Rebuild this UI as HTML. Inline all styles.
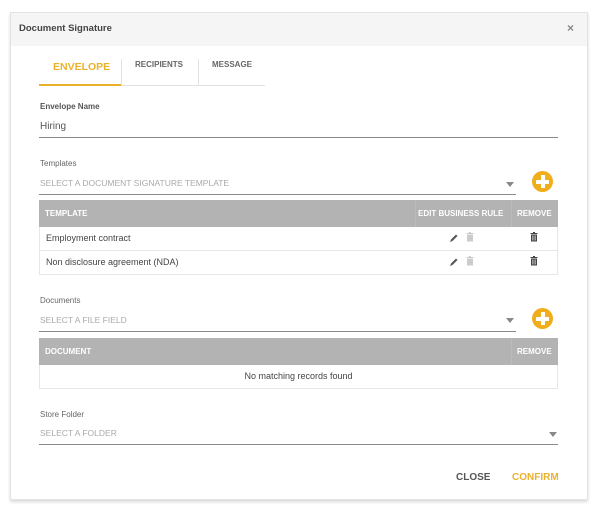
<!DOCTYPE html>
<html><head><style>
*{margin:0;padding:0;box-sizing:border-box}
body{width:600px;height:514px;background:#fff;font-family:"Liberation Sans",sans-serif;position:relative;overflow:hidden;color:#555}
.a{position:absolute;white-space:nowrap}
.modal{position:absolute;left:10px;top:12px;width:578px;height:488px;background:#fff;border:1px solid #e2e2e2;box-shadow:0 2px 3px rgba(0,0,0,.15)}
.hdr{position:absolute;left:11px;top:13px;width:576px;height:33px;background:#f5f5f5}
.line{position:absolute;height:1px;background:#8a8a8a}
.lbl{font-size:8px;color:#666}
.ph{font-size:8.5px;color:#aaa}
.th{position:absolute;background:#b3b3b3;color:#fff;font-weight:bold;font-size:8px;height:27px;line-height:27px}
.row{position:absolute;border:1px solid #e6e6e6;border-top:none;font-size:9px;color:#444;line-height:22px;padding-left:6px}
.plus{position:absolute;width:21px;height:21px;border-radius:50%;background:#f0ad1c}
.plus:before{content:"";position:absolute;left:4px;top:8.5px;width:13px;height:4px;background:#fff}
.plus:after{content:"";position:absolute;left:8.5px;top:4px;width:4px;height:13px;background:#fff}
.arr{position:absolute;width:0;height:0;border-left:4.5px solid transparent;border-right:4.5px solid transparent;border-top:5px solid #888}
</style></head><body>
<div class="modal"></div>
<div class="hdr"></div>
<div class="a" style="left:19px;top:23px;font-size:9.5px;font-weight:bold;color:#444">Document Signature</div>
<div class="a" style="left:567px;top:21px;font-size:12px;font-weight:bold;color:#888">×</div>

<div class="a" style="left:53px;top:61px;font-size:10.5px;font-weight:bold;color:#eab12c">ENVELOPE</div>
<div class="a" style="left:135px;top:60px;font-size:8px;font-weight:bold;color:#666">RECIPIENTS</div>
<div class="a" style="left:212px;top:60px;font-size:8px;font-weight:bold;color:#666">MESSAGE</div>
<div class="a" style="left:121px;top:59px;width:1px;height:26px;background:#e2e2e2"></div>
<div class="a" style="left:198px;top:59px;width:1px;height:26px;background:#e2e2e2"></div>
<div class="a" style="left:39px;top:85px;width:226px;height:1px;background:#e2e2e2"></div>
<div class="a" style="left:39px;top:84px;width:82px;height:2px;background:#eab12c"></div>

<div class="a lbl" style="left:40px;top:102px;font-weight:bold;color:#555">Envelope Name</div>
<div class="a" style="left:40px;top:121px;font-size:10px;color:#555">Hiring</div>
<div class="line" style="left:39px;top:137px;width:519px"></div>

<div class="a lbl" style="left:40px;top:159px">Templates</div>
<div class="a ph" style="left:40px;top:178px">SELECT A DOCUMENT SIGNATURE TEMPLATE</div>
<div class="arr" style="left:506px;top:182px"></div>
<div class="line" style="left:39px;top:194px;width:477px"></div>
<div class="plus" style="left:532px;top:171px"></div>

<div class="th" style="left:39px;top:200px;width:519px;padding-left:6px">TEMPLATE</div>
<div class="a" style="left:415px;top:200px;width:1px;height:27px;background:#bbb"></div>
<div class="a" style="left:511px;top:200px;width:1px;height:27px;background:#bbb"></div>
<div class="a" style="left:418px;top:209px;font-size:8px;font-weight:bold;color:#fff">EDIT BUSINESS RULE</div>
<div class="a" style="left:517px;top:209px;font-size:8px;font-weight:bold;color:#fff">REMOVE</div>
<div class="row" style="left:39px;top:227px;width:519px;height:24px">Employment contract</div>
<div class="row" style="left:39px;top:251px;width:519px;height:24px">Non disclosure agreement (NDA)</div>

<svg class="a" style="left:449px;top:233px" width="10" height="10" viewBox="0 0 10 10"><path d="M1 9 L2 6.5 L7 1.5 L8.5 3 L3.5 8 Z" fill="#555"/></svg>
<svg class="a" style="left:466px;top:232px" width="8" height="10" viewBox="0 0 8 10"><rect x="0.5" y="1" width="7" height="1" fill="#ccc"/><rect x="3" y="0" width="2" height="1" fill="#ccc"/><rect x="1" y="2.5" width="6" height="7" fill="#ccc"/></svg>
<svg class="a" style="left:530px;top:232px" width="8" height="10" viewBox="0 0 8 10"><rect x="0.5" y="1" width="7" height="1" fill="#444"/><rect x="3" y="0" width="2" height="1" fill="#444"/><rect x="1" y="2.5" width="6" height="7" fill="#444"/><rect x="2.5" y="3.5" width="0.8" height="5" fill="#fff"/><rect x="4.7" y="3.5" width="0.8" height="5" fill="#fff"/></svg>
<svg class="a" style="left:449px;top:257px" width="10" height="10" viewBox="0 0 10 10"><path d="M1 9 L2 6.5 L7 1.5 L8.5 3 L3.5 8 Z" fill="#555"/></svg>
<svg class="a" style="left:466px;top:256px" width="8" height="10" viewBox="0 0 8 10"><rect x="0.5" y="1" width="7" height="1" fill="#ccc"/><rect x="3" y="0" width="2" height="1" fill="#ccc"/><rect x="1" y="2.5" width="6" height="7" fill="#ccc"/></svg>
<svg class="a" style="left:530px;top:256px" width="8" height="10" viewBox="0 0 8 10"><rect x="0.5" y="1" width="7" height="1" fill="#444"/><rect x="3" y="0" width="2" height="1" fill="#444"/><rect x="1" y="2.5" width="6" height="7" fill="#444"/><rect x="2.5" y="3.5" width="0.8" height="5" fill="#fff"/><rect x="4.7" y="3.5" width="0.8" height="5" fill="#fff"/></svg>

<div class="a lbl" style="left:40px;top:296px">Documents</div>
<div class="a ph" style="left:40px;top:315px">SELECT A FILE FIELD</div>
<div class="arr" style="left:506px;top:318px"></div>
<div class="line" style="left:39px;top:331px;width:477px"></div>
<div class="plus" style="left:532px;top:308px"></div>

<div class="th" style="left:39px;top:338px;width:519px;padding-left:6px">DOCUMENT</div>
<div class="a" style="left:511px;top:338px;width:1px;height:27px;background:#bbb"></div>
<div class="a" style="left:517px;top:347px;font-size:8px;font-weight:bold;color:#fff">REMOVE</div>
<div class="row" style="left:39px;top:365px;width:519px;height:24px;text-align:center;padding-left:0">No matching records found</div>

<div class="a lbl" style="left:40px;top:410px">Store Folder</div>
<div class="a ph" style="left:40px;top:428px">SELECT A FOLDER</div>
<div class="arr" style="left:549px;top:432px"></div>
<div class="line" style="left:39px;top:444px;width:519px"></div>

<div class="a" style="left:456px;top:472px;font-size:10px;font-weight:bold;color:#555">CLOSE</div>
<div class="a" style="left:512px;top:472px;font-size:10px;font-weight:bold;color:#eab12c">CONFIRM</div>
</body></html>
